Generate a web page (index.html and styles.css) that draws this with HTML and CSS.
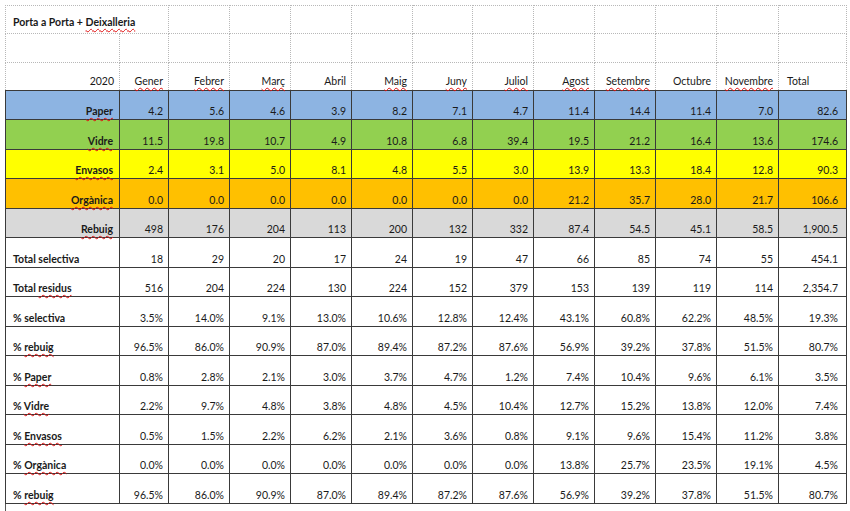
FILE: index.html
```html
<!DOCTYPE html>
<html lang="ca">
<head>
<meta charset="utf-8">
<title>Porta a Porta + Deixalleria</title>
<link rel="stylesheet" href="styles.css">
</head>
<body>
<table class="sheet">
  <colgroup>
    <col class="c-label"><col class="c-gen"><col class="c-m"><col class="c-m"><col class="c-m"><col class="c-m"><col class="c-m60"><col class="c-m"><col class="c-m"><col class="c-m"><col class="c-m"><col class="c-m62"><col class="c-tot">
  </colgroup>
  <tbody>
    <tr class="top">
      <td class="title" colspan="2">Porta a Porta + <span class="sp">Deixalleria</span></td>
      <td></td><td></td><td></td><td></td><td></td><td></td><td></td><td></td><td></td><td></td><td></td>
    </tr>
    <tr class="top">
      <td></td><td></td><td></td><td></td><td></td><td></td><td></td><td></td><td></td><td></td><td></td><td></td><td></td>
    </tr>
    <tr class="top head">
      <td>2020</td><td><span class="sp">Gener</span></td><td><span class="sp">Febrer</span></td><td><span class="sp">Març</span></td><td>Abril</td><td><span class="sp">Maig</span></td><td><span class="sp">Juny</span></td><td><span class="sp">Juliol</span></td><td><span class="sp">Agost</span></td><td><span class="sp">Setembre</span></td><td>Octubre</td><td><span class="sp">Novembre</span></td><td class="tot-h">Total</td>
    </tr>
    <tr class="row blue">
      <th><span class="sp">Paper</span></th><td>4.2</td><td>5.6</td><td>4.6</td><td>3.9</td><td>8.2</td><td>7.1</td><td>4.7</td><td>11.4</td><td>14.4</td><td>11.4</td><td>7.0</td><td class="tot">82.6</td>
    </tr>
    <tr class="row green">
      <th><span class="sp">Vidre</span></th><td>11.5</td><td>19.8</td><td>10.7</td><td>4.9</td><td>10.8</td><td>6.8</td><td>39.4</td><td>19.5</td><td>21.2</td><td>16.4</td><td>13.6</td><td class="tot">174.6</td>
    </tr>
    <tr class="row yellow">
      <th><span class="sp">Envasos</span></th><td>2.4</td><td>3.1</td><td>5.0</td><td>8.1</td><td>4.8</td><td>5.5</td><td>3.0</td><td>13.9</td><td>13.3</td><td>18.4</td><td>12.8</td><td class="tot">90.3</td>
    </tr>
    <tr class="row orange">
      <th><span class="sp">Orgànica</span></th><td>0.0</td><td>0.0</td><td>0.0</td><td>0.0</td><td>0.0</td><td>0.0</td><td>0.0</td><td>21.2</td><td>35.7</td><td>28.0</td><td>21.7</td><td class="tot">106.6</td>
    </tr>
    <tr class="row grey">
      <th><span class="sp">Rebuig</span></th><td>498</td><td>176</td><td>204</td><td>113</td><td>200</td><td>132</td><td>332</td><td>87.4</td><td>54.5</td><td>45.1</td><td>58.5</td><td class="tot">1,900.5</td>
    </tr>
    <tr class="row plain">
      <th>Total selectiva</th><td>18</td><td>29</td><td>20</td><td>17</td><td>24</td><td>19</td><td>47</td><td>66</td><td>85</td><td>74</td><td>55</td><td class="tot">454.1</td>
    </tr>
    <tr class="row plain">
      <th>Total <span class="sp">residus</span></th><td>516</td><td>204</td><td>224</td><td>130</td><td>224</td><td>152</td><td>379</td><td>153</td><td>139</td><td>119</td><td>114</td><td class="tot">2,354.7</td>
    </tr>
    <tr class="row plain">
      <th>% selectiva</th><td>3.5%</td><td>14.0%</td><td>9.1%</td><td>13.0%</td><td>10.6%</td><td>12.8%</td><td>12.4%</td><td>43.1%</td><td>60.8%</td><td>62.2%</td><td>48.5%</td><td class="tot">19.3%</td>
    </tr>
    <tr class="row plain">
      <th>% <span class="sp">rebuig</span></th><td>96.5%</td><td>86.0%</td><td>90.9%</td><td>87.0%</td><td>89.4%</td><td>87.2%</td><td>87.6%</td><td>56.9%</td><td>39.2%</td><td>37.8%</td><td>51.5%</td><td class="tot">80.7%</td>
    </tr>
    <tr class="row plain">
      <th>% <span class="sp">Paper</span></th><td>0.8%</td><td>2.8%</td><td>2.1%</td><td>3.0%</td><td>3.7%</td><td>4.7%</td><td>1.2%</td><td>7.4%</td><td>10.4%</td><td>9.6%</td><td>6.1%</td><td class="tot">3.5%</td>
    </tr>
    <tr class="row plain">
      <th>% <span class="sp">Vidre</span></th><td>2.2%</td><td>9.7%</td><td>4.8%</td><td>3.8%</td><td>4.8%</td><td>4.5%</td><td>10.4%</td><td>12.7%</td><td>15.2%</td><td>13.8%</td><td>12.0%</td><td class="tot">7.4%</td>
    </tr>
    <tr class="row plain">
      <th>% <span class="sp">Envasos</span></th><td>0.5%</td><td>1.5%</td><td>2.2%</td><td>6.2%</td><td>2.1%</td><td>3.6%</td><td>0.8%</td><td>9.1%</td><td>9.6%</td><td>15.4%</td><td>11.2%</td><td class="tot">3.8%</td>
    </tr>
    <tr class="row plain">
      <th>% <span class="sp">Orgànica</span></th><td>0.0%</td><td>0.0%</td><td>0.0%</td><td>0.0%</td><td>0.0%</td><td>0.0%</td><td>0.0%</td><td>13.8%</td><td>25.7%</td><td>23.5%</td><td>19.1%</td><td class="tot">4.5%</td>
    </tr>
    <tr class="row plain">
      <th>% <span class="sp">rebuig</span></th><td>96.5%</td><td>86.0%</td><td>90.9%</td><td>87.0%</td><td>89.4%</td><td>87.2%</td><td>87.6%</td><td>56.9%</td><td>39.2%</td><td>37.8%</td><td>51.5%</td><td class="tot">80.7%</td>
    </tr>
    <tr class="tail">
      <td></td><td></td><td></td><td></td><td></td><td></td><td></td><td></td><td></td><td></td><td></td><td></td><td></td>
    </tr>
  </tbody>
</table>
</body>
</html>
```

FILE: styles.css
```css
html, body {
  margin: 0;
  padding: 0;
  background: #ffffff;
}

body {
  padding: 5px 0 0 5px;
  font-family: "Lato", "Open Sans", "Liberation Sans", sans-serif;
  font-size: 10.5px;
  line-height: 12px;
  color: #1a1a1a;
}

.sheet {
  border-collapse: collapse;
  table-layout: fixed;
  width: 842px;
}

.c-label { width: 114px; }
.c-gen { width: 49px; }
.c-m { width: 61px; }
.c-m60 { width: 60px; }
.c-m62 { width: 62px; }
.c-tot { width: 68px; }

.sheet td,
.sheet th {
  padding: 0 5px 2px 5px;
  text-align: right;
  vertical-align: bottom;
  white-space: nowrap;
  overflow: visible;
  font-weight: normal;
}

/* top header area with dotted gridlines */
.top { height: 28.3px; }
.top td {
  border: 1px dotted #b8b8b8;
}
.title {
  text-align: left !important;
  font-weight: bold !important;
  padding-left: 7px !important;
  padding-bottom: 5px !important;
}
.head td { padding-bottom: 3px; }
.head .tot-h {
  text-align: left;
  padding-left: 8px;
}

/* data rows */
.row { height: 29.5px; }
.row td,
.row th {
  border: 1px solid #3a3a3a;
}
.row th {
  font-weight: bold;
  padding-right: 6px;
}
.row .tot { padding-right: 8px; }

.blue td, .blue th { background: #8db4e2; }
.green td, .green th { background: #92d050; }
.yellow td, .yellow th { background: #ffff00; }
.orange td, .orange th { background: #ffc000; }
.grey td, .grey th { background: #d9d9d9; }

.plain th {
  text-align: left;
  padding-left: 7px;
}

.tail { height: 9px; }
.tail td {
  border: none;
  padding: 0;
}
.tail td:first-child {
  border-left: 1px solid #555555;
}

/* spell-check squiggle */
.sp {
  text-decoration: underline wavy #e01010;
  text-decoration-thickness: 1px;
  text-underline-offset: 2px;
}
```
